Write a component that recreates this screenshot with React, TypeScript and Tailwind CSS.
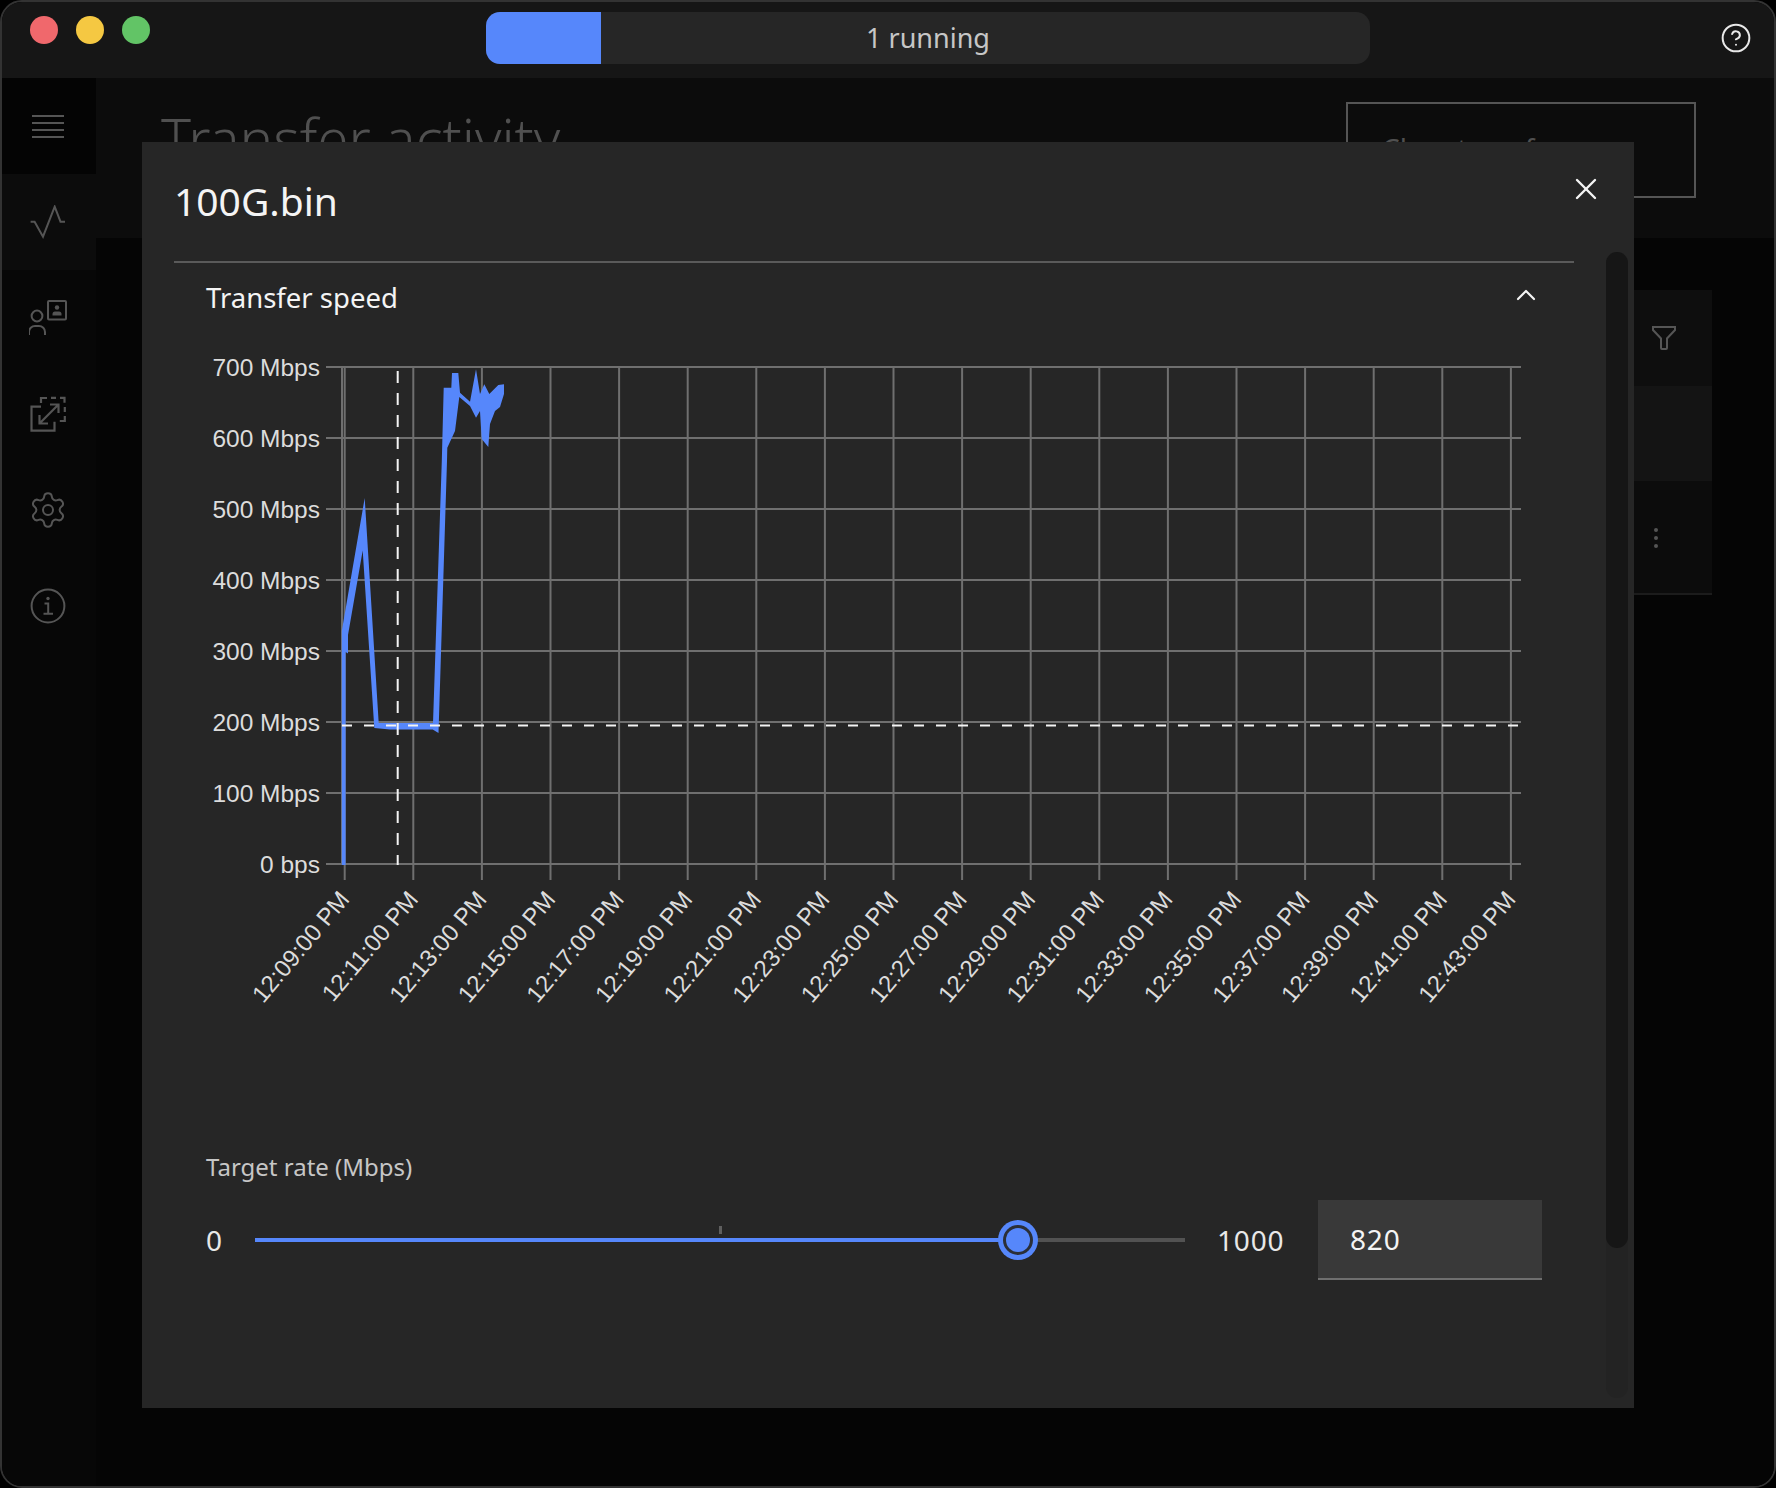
import { CircleHelp, Settings, X, ChevronUp } from "lucide-react"

const uiFont = "font-['Noto_Sans',sans-serif]"

const yLabels = ["700 Mbps", "600 Mbps", "500 Mbps", "400 Mbps", "300 Mbps", "200 Mbps", "100 Mbps", "0 bps"]
const xLabels = [
  "12:09:00 PM", "12:11:00 PM", "12:13:00 PM", "12:15:00 PM", "12:17:00 PM", "12:19:00 PM",
  "12:21:00 PM", "12:23:00 PM", "12:25:00 PM", "12:27:00 PM", "12:29:00 PM", "12:31:00 PM",
  "12:33:00 PM", "12:35:00 PM", "12:37:00 PM", "12:39:00 PM", "12:41:00 PM", "12:43:00 PM",
]

const speedShape =
  "341.8,864 341.8,630 364.7,497 378.7,722 433,722 441.8,460 443.7,386.7 451.3,386.7 452,372 458.3,372 460,391.7 470,400.7 476,368.3 480,393 484.3,383.3 489.3,393 498.3,384 504,383.3 504,393 500,406 495,410 490,423 488.3,446 481.7,438 480,410 476,416.7 470,405 459.3,396 455,430 447.3,446.7 447,460 438.5,732 432.7,728.6 390,728.6 374.3,727 362.7,549.5 348,634 348,652.6 345.6,651 345.6,864"

const SpeedChart = () => (
  <svg viewBox="174 340 1400 790" className="block w-[1400px] h-[790px]">
    {yLabels.map((label, i) => {
      const y = 366 + i * 71
      return (
        <g key={label}>
          <line x1={326} x2={1521} y1={y} y2={y} stroke="#6f6f6f" strokeWidth={2} />
          <text x={320} y={y + 9} textAnchor="end" fontSize={24.5} fill="#dcdcdc" fontFamily="Liberation Sans, sans-serif">
            {label}
          </text>
        </g>
      )
    })}
    <line x1={342} x2={342} y1={366} y2={864} stroke="#6f6f6f" strokeWidth={2} />
    {xLabels.map((label, i) => {
      const x = 344.7 + i * 68.6
      return (
        <g key={label}>
          <line x1={x} x2={x} y1={366} y2={879} stroke="#6f6f6f" strokeWidth={2} />
          <text
            x={x + 6}
            y={899}
            textAnchor="end"
            fontSize={24}
            fill="#dcdcdc"
            fontFamily="Liberation Sans, sans-serif"
            transform={`rotate(-50 ${x + 6} 899)`}
          >
            {label}
          </text>
        </g>
      )
    })}
    <polygon points={speedShape} fill="#5687fb" />
    <line x1={342} x2={1521} y1={724.6} y2={724.6} stroke="#f4f4f4" strokeWidth={2} strokeDasharray="10 12" />
    <line x1={397.7} x2={397.7} y1={370} y2={864} stroke="#f4f4f4" strokeWidth={2} strokeDasharray="12 10" />
  </svg>
)

const Slider = () => (
  <div className="flex items-center h-[80px] text-[28px] tracking-[0.8px] text-[#e8e8e8]">
    <span className="w-[49px]">0</span>
    <div className="relative w-[930px] h-[4px] bg-[#525252]">
      <div className="h-full w-[763px] bg-[#5687fb]" />
      <div className="absolute left-[464px] top-[-12px] w-[3px] h-[8px] bg-[#5f5f5f]" />
      <div className="absolute left-[743px] top-[-18px] w-[40px] h-[40px] rounded-full bg-[#5687fb] flex items-center justify-center">
        <div className="w-[30px] h-[30px] rounded-full bg-[#2b2f38] flex items-center justify-center">
          <div className="w-[24px] h-[24px] rounded-full bg-[#5687fb]" />
        </div>
      </div>
    </div>
    <span className="ml-[32px] w-[101px]">1000</span>
    <div className="w-[224px] h-[80px] bg-[#393939] border-b-2 border-[#6f6f6f] flex items-center pl-[32px] text-[#f4f4f4]">
      820
    </div>
  </div>
)

const ActivityIcon = () => (
  <svg width="36" height="34" viewBox="30 205 36 34" fill="none" stroke="#555" strokeWidth="2">
    <path d="M30.6 221.7h4l8.4 15 11.7-30 5.8 15H65" />
  </svg>
)

const UsersIcon = () => (
  <svg width="38" height="38" viewBox="30 300 38 38" fill="none" stroke="#555" strokeWidth="2">
    <circle cx="38" cy="316" r="5.4" />
    <path d="M30 335v-3a6 6 0 0 1 6-6h4a6 6 0 0 1 6 6v3" />
    <rect x="49" y="301" width="18" height="18.5" rx="1" />
    <circle cx="58" cy="307.5" r="2.2" fill="#555" stroke="none" />
    <path d="M53.5 315.5v-1.5a2.5 2.5 0 0 1 2.5-2.5h4a2.5 2.5 0 0 1 2.5 2.5v1.5z" fill="#555" stroke="none" />
  </svg>
)

const TransferIcon = () => (
  <svg width="36" height="36" viewBox="30 396 36 36" fill="none" stroke="#555" strokeWidth="2.2">
    <path d="M41 406.7h-9.5v24h23v-9" />
    <path d="M41 403v-5h6M51 397.8h5M60 397.8h4.5v5M64.8 407v5M64.8 416v5h-5" />
    <path d="M39.5 423.5l18.5-18.5M50 404.5h8.5v8.5M39.5 415v8.5h8.5" />
  </svg>
)

const InfoIcon = () => (
  <svg width="36" height="36" viewBox="30 588 36 36" fill="none" stroke="#555" strokeWidth="2">
    <circle cx="48" cy="606" r="16.4" />
    <circle cx="48" cy="598.5" r="1.7" fill="#555" stroke="none" />
    <path d="M44.5 603.5h3.7v10M43.5 613.7h9.5" />
  </svg>
)

const FilterIcon = () => (
  <svg width="26" height="26" viewBox="0 0 26 26" fill="none" stroke="#555" strokeWidth="2">
    <path d="M2 2h22v3l-8 8.5V23a1 1 0 0 1-1 1h-4a1 1 0 0 1-1-1v-9.5L2 5z" />
  </svg>
)

const Sidebar = () => (
  <aside className="w-[94px] flex flex-col shrink-0 bg-[#070707]">
    <div className="h-[96px] bg-[#040404] flex flex-col items-center justify-center gap-[5px] pr-[2px]">
      <div className="w-[32px] h-[2px] bg-[#555]" />
      <div className="w-[32px] h-[2px] bg-[#555]" />
      <div className="w-[32px] h-[2px] bg-[#555]" />
      <div className="w-[32px] h-[2px] bg-[#555]" />
    </div>
    <div className="h-[96px] bg-[#0c0c0c] flex items-center justify-center pr-[2px]">
      <ActivityIcon />
    </div>
    <div className="h-[96px] flex items-center justify-center pr-[2px] pt-[2px]">
      <UsersIcon />
    </div>
    <div className="h-[96px] flex items-center justify-center pr-[2px]">
      <TransferIcon />
    </div>
    <div className="h-[96px] flex items-center justify-center pr-[2px]">
      <Settings size={40} strokeWidth={1.2} color="#555" />
    </div>
    <div className="h-[96px] flex items-center justify-center pr-[2px]">
      <InfoIcon />
    </div>
  </aside>
)

const Backdrop = () => (
  <main className="flex-1 flex flex-col bg-[#050505]">
    <header className="h-[160px] bg-[#0c0c0c] flex pl-[65px] pr-[78px] pt-[24px] justify-between">
      <h1 className="text-[56.5px] leading-[66px] mt-[4px] text-[#505050] font-light">Transfer activity</h1>
      <div className="w-[350px] h-[96px] border-2 border-[#555] pl-[34px] pt-[23px] text-[28px] text-[#505050]">
        Clear transfers
      </div>
    </header>
    <section className="mt-[52px] ml-[46px] w-[1570px]">
      <div className="h-[96px] bg-[#0e0e0e] flex items-center justify-end pr-[35px]">
        <FilterIcon />
      </div>
      <div className="h-[95px] bg-[#141414]" />
      <div className="h-[114px] bg-[#0c0c0c] border-b-2 border-[#1c1c1c] flex items-center justify-end pr-[54px]">
        <div className="flex flex-col gap-[4px] mt-[2px]">
          <div className="w-[4px] h-[4px] rounded-full bg-[#555]" />
          <div className="w-[4px] h-[4px] rounded-full bg-[#555]" />
          <div className="w-[4px] h-[4px] rounded-full bg-[#555]" />
        </div>
      </div>
    </section>
  </main>
)

const TransferDialog = () => (
  <div className={`absolute left-[142px] top-[142px] w-[1492px] h-[1266px] bg-[#262626] pl-[32px] ${uiFont}`}>
    <div className="w-[1400px] h-[121px] border-b-2 border-[#5a5a5a] flex justify-between">
      <h2 className="text-[39px] leading-[48px] pt-[35px] text-[#f4f4f4]">100G.bin</h2>
      <X size={36} strokeWidth={1.6} color="#f4f4f4" className="mt-[29px] mr-[-30px]" />
    </div>
    <div className="w-[1400px] h-[78px] pl-[32px] pr-[32px] pb-[8px] flex items-center justify-between text-[27.5px] text-[#f4f4f4]">
      <span>Transfer speed</span>
      <ChevronUp size={32} strokeWidth={1.6} color="#f4f4f4" className="mb-[7px]" />
    </div>
    <SpeedChart />
    <div className="pl-[32px] mt-[16px]">
      <div className="h-[40px] text-[24px] text-[#c6c6c6] leading-[40px] mb-[13px]">Target rate (Mbps)</div>
      <Slider />
    </div>
    <div className="absolute left-[1464px] top-[110px] w-[22px] h-[1146px] rounded-full bg-[#232323]">
      <div className="h-[996px] rounded-full bg-[#161616]" />
    </div>
  </div>
)

const App = () => (
  <div className={`relative w-[1776px] h-[1488px] bg-black overflow-hidden ${uiFont}`}>
    <div className="w-full h-full rounded-[22px] border-2 border-[#333] overflow-hidden flex flex-col bg-[#050505]">
      <div className="h-[76px] shrink-0 bg-[#161616] relative flex items-center justify-center">
        <div className="absolute left-[28px] top-[14px] flex gap-[18px]">
          <div className="w-[28px] h-[28px] rounded-full bg-[#f0686c]" />
          <div className="w-[28px] h-[28px] rounded-full bg-[#f5c842]" />
          <div className="w-[28px] h-[28px] rounded-full bg-[#62c466]" />
        </div>
        <div className="relative w-[884px] h-[52px] mt-[-4px] ml-[80px] rounded-[14px] bg-[#262626] overflow-hidden flex items-center justify-center">
          <div className="absolute left-0 top-0 h-full w-[115px] bg-[#5687fb]" />
          <span className="text-[27px] text-[#c6c6c6]">1 running</span>
        </div>
        <CircleHelp size={32} strokeWidth={1.5} color="#e8e8e8" className="absolute right-[22px] top-[20px]" />
      </div>
      <div className="flex-1 flex">
        <Sidebar />
        <Backdrop />
      </div>
    </div>
    <TransferDialog />
  </div>
)

export default App
